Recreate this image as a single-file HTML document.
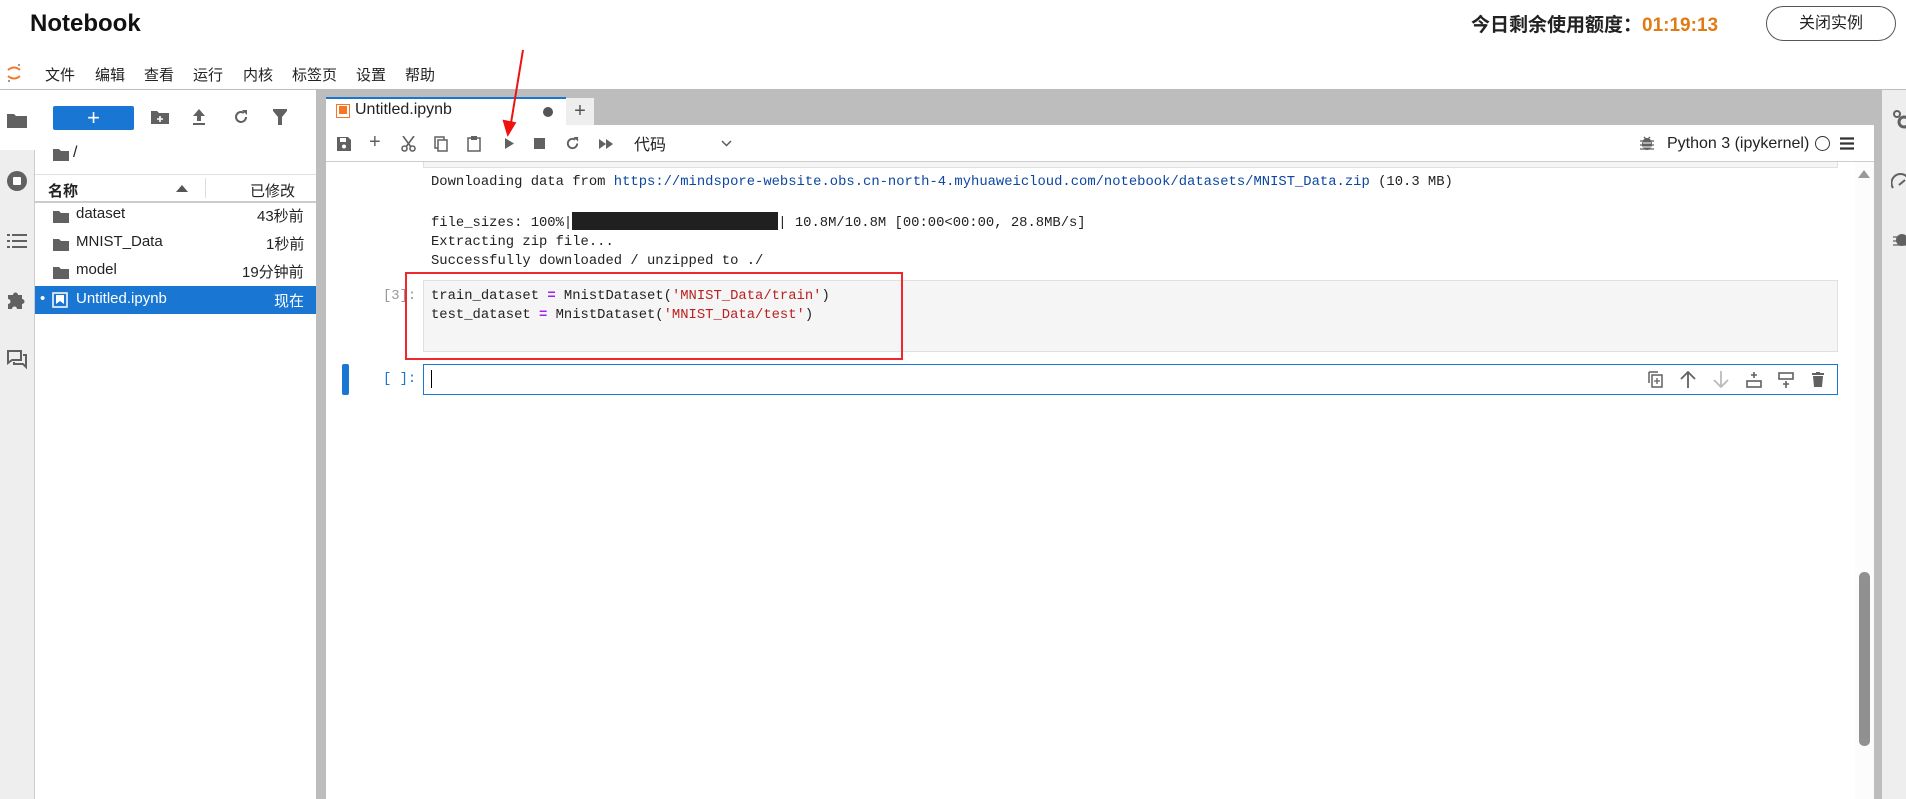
<!DOCTYPE html>
<html><head><meta charset="utf-8"><style>
*{margin:0;padding:0;box-sizing:border-box}
body{width:1906px;height:799px;overflow:hidden;background:#fff;font-family:"Liberation Sans","Noto Sans CJK SC",sans-serif;color:#222;position:relative}
.a{position:absolute}
.mono{font-family:"Liberation Mono","Noto Sans CJK SC",monospace;font-size:13.85px;white-space:pre}
.ic{fill:#616161}
</style></head><body>
<!-- header -->
<div class="a" style="left:30px;top:10px;font-size:24px;font-weight:bold;color:#111">Notebook</div>
<div class="a" style="left:1471px;top:10px;font-size:19px;font-weight:bold;color:#222">今日剩余使用额度：<span style="color:#e07b14">01:19:13</span></div>
<div class="a" style="left:1766px;top:6px;width:130px;height:35px;border:1px solid #555;border-radius:18px;font-size:16px;text-align:center;line-height:33px;color:#222">关闭实例</div>
<!-- menu -->
<svg class="a" style="left:6px;top:62px" width="16" height="22" viewBox="0 0 16 22"><path d="M2 8 Q8 3 14 8" stroke="#f37726" stroke-width="2" fill="none"/><path d="M2 14 Q8 19 14 14" stroke="#f37726" stroke-width="2" fill="none"/><circle cx="13" cy="3" r="1" fill="#777"/><circle cx="3" cy="19" r="1" fill="#777"/></svg>
<div class="a" style="top:64px;font-size:15px;color:#222;left:0;width:500px;height:20px">
<span class="a" style="left:45px">文件</span><span class="a" style="left:95px">编辑</span><span class="a" style="left:144px">查看</span><span class="a" style="left:193px">运行</span><span class="a" style="left:243px">内核</span><span class="a" style="left:292px">标签页</span><span class="a" style="left:356px">设置</span><span class="a" style="left:405px">帮助</span></div>
<div class="a" style="left:0;top:89px;width:1906px;height:1px;background:#bdbdbd"></div>
<!-- left icon bar -->
<div class="a" style="left:0;top:150px;width:35px;height:649px;background:#eee;border-right:1px solid #ccc"></div>
<div class="a" style="left:34px;top:90px;width:1px;height:60px;background:#fff"></div>
<svg class="a" style="left:7px;top:112px" width="20" height="16" viewBox="0 0 20 16"><path class="ic" d="M0 2h7l2 2h11v12H0z"/></svg>
<svg class="a" style="left:6px;top:170px" width="22" height="22" viewBox="0 0 22 22"><circle cx="11" cy="11" r="10" fill="#616161"/><rect x="7" y="7" width="8" height="8" fill="#fff" rx="1"/></svg>
<svg class="a" style="left:7px;top:233px" width="20" height="16" viewBox="0 0 20 16"><g fill="#616161"><rect x="0" y="1" width="3" height="2"/><rect x="5" y="1" width="15" height="2"/><rect x="0" y="7" width="3" height="2"/><rect x="5" y="7" width="15" height="2"/><rect x="0" y="13" width="3" height="2"/><rect x="5" y="13" width="15" height="2"/></g></svg>
<svg class="a" style="left:6px;top:289px" width="22" height="22" viewBox="0 0 22 22"><path class="ic" d="M2 6h5a2.5 2.5 0 1 1 5 0h4v4a2.5 2.5 0 1 1 0 5v5h-5a2.5 2.5 0 1 0-5 0H2v-5a2.5 2.5 0 1 0 0-5z"/></svg>
<svg class="a" style="left:7px;top:350px" width="20" height="20" viewBox="0 0 20 20"><path d="M1 1h13v9H5l-4 3z" fill="none" stroke="#616161" stroke-width="2"/><path d="M16 5h3v12l-3-3H7v-2" fill="none" stroke="#616161" stroke-width="2"/></svg>
<!-- file panel -->
<div class="a" style="left:53px;top:106px;width:81px;height:24px;background:#1976d2;border-radius:2px;color:#fff;font-size:22px;text-align:center;line-height:23px">+</div>
<svg class="a" style="left:151px;top:110px" width="18" height="14" viewBox="0 0 18 14"><path class="ic" d="M0 1h6l2 2h10v11H0z"/><path d="M9 6v6M6 9h6" stroke="#fff" stroke-width="1.6"/></svg>
<svg class="a" style="left:192px;top:109px" width="14" height="16" viewBox="0 0 14 16"><path class="ic" d="M7 0l6 7H9v5H5V7H1z"/><rect class="ic" x="1" y="14" width="12" height="2"/></svg>
<svg class="a" style="left:233px;top:109px" width="16" height="16" viewBox="0 0 16 16"><path d="M13 8a5 5 0 1 1-2-4" fill="none" stroke="#616161" stroke-width="2"/><path class="ic" d="M9 1h5v5z"/></svg>
<svg class="a" style="left:273px;top:109px" width="14" height="16" viewBox="0 0 14 16"><path class="ic" d="M0 0h14v2L9 8v8H5V8L0 2z"/></svg>
<svg class="a" style="left:53px;top:148px" width="16" height="13" viewBox="0 0 16 13"><path class="ic" d="M0 1h6l2 2h8v10H0z"/></svg>
<div class="a" style="left:73px;top:144px;font-size:16px">/</div>
<div class="a" style="left:35px;top:174px;width:281px;height:1px;background:#e0e0e0"></div>
<div class="a" style="left:35px;top:201px;width:281px;height:2px;background:#ccc"></div>
<div class="a" style="left:205px;top:178px;width:1px;height:20px;background:#ddd"></div>
<div class="a" style="left:48px;top:180px;font-size:15px;font-weight:bold">名称</div>
<svg class="a" style="left:176px;top:185px" width="12" height="7"><path d="M0 7L6 0l6 7z" fill="#555"/></svg>
<div class="a" style="left:250px;top:180px;font-size:15px">已修改</div>
<div class="a" style="left:0;top:0;font-size:15px">
<svg class="a" style="left:53px;top:210px" width="16" height="13" viewBox="0 0 16 13"><path class="ic" d="M0 1h6l2 2h8v10H0z"/></svg>
<span class="a" style="left:76px;top:205px;white-space:nowrap">dataset</span><span class="a" style="left:257px;top:205px;white-space:nowrap">43秒前</span>
<svg class="a" style="left:53px;top:238px" width="16" height="13" viewBox="0 0 16 13"><path class="ic" d="M0 1h6l2 2h8v10H0z"/></svg>
<span class="a" style="left:76px;top:233px;white-space:nowrap">MNIST_Data</span><span class="a" style="left:266px;top:233px;white-space:nowrap">1秒前</span>
<svg class="a" style="left:53px;top:266px" width="16" height="13" viewBox="0 0 16 13"><path class="ic" d="M0 1h6l2 2h8v10H0z"/></svg>
<span class="a" style="left:76px;top:261px;white-space:nowrap">model</span><span class="a" style="left:242px;top:261px;white-space:nowrap">19分钟前</span>
</div>
<div class="a" style="left:35px;top:286px;width:281px;height:28px;background:#1976d2;color:#fff;font-size:15px">
<span class="a" style="left:5px;top:4px">•</span>
<svg class="a" style="left:17px;top:6px" width="16" height="16" viewBox="0 0 16 16"><rect x="1" y="1" width="14" height="14" fill="none" stroke="#fff" stroke-width="1.5"/><path d="M4 3h8v9l-4-3-4 3z" fill="#fff"/></svg>
<span class="a" style="left:41px;top:4px">Untitled.ipynb</span><span class="a" style="left:239px;top:4px">现在</span></div>
<!-- splitter -->
<div class="a" style="left:316px;top:90px;width:10px;height:709px;background:#bdbdbd"></div>
<!-- tab bar -->
<div class="a" style="left:326px;top:90px;width:1556px;height:35px;background:#bdbdbd"></div>
<div class="a" style="left:326px;top:97px;width:240px;height:28px;background:#fff;border-top:2px solid #1976d2"></div>
<svg class="a" style="left:336px;top:104px" width="14" height="14" viewBox="0 0 14 14"><rect x="0.5" y="0.5" width="13" height="13" fill="#fff" stroke="#f37726"/><rect x="3" y="2" width="8" height="8" fill="#f37726"/></svg>
<div class="a" style="left:355px;top:101px;font-size:16px;color:#222">Untitled.ipynb</div>
<div class="a" style="left:543px;top:107px;width:10px;height:10px;border-radius:5px;background:#555"></div>
<div class="a" style="left:566px;top:98px;width:28px;height:27px;background:#eee;font-size:20px;color:#555;text-align:center;line-height:26px">+</div>
<!-- toolbar -->
<div class="a" style="left:326px;top:161px;width:1556px;height:1px;background:#ccc"></div>
<svg class="a" style="left:337px;top:137px" width="14" height="14" viewBox="0 0 14 14"><path class="ic" d="M0 0h11l3 3v11H0z"/><rect x="3" y="1" width="6" height="4" fill="#fff"/><circle cx="7" cy="9.5" r="2" fill="#fff"/></svg>
<div class="a" style="left:369px;top:131px;font-size:20px;color:#616161">+</div>
<svg class="a" style="left:401px;top:136px" width="15" height="16" viewBox="0 0 15 16"><circle cx="3.5" cy="12.5" r="2.5" fill="none" stroke="#616161" stroke-width="1.6"/><circle cx="11.5" cy="12.5" r="2.5" fill="none" stroke="#616161" stroke-width="1.6"/><path d="M5 11L13 0M10 11L2 0" stroke="#616161" stroke-width="1.6"/></svg>
<svg class="a" style="left:434px;top:136px" width="14" height="16" viewBox="0 0 14 16"><rect x="1" y="1" width="9" height="11" fill="none" stroke="#616161" stroke-width="1.5"/><rect x="4" y="4" width="9" height="11" fill="#fff" stroke="#616161" stroke-width="1.5"/></svg>
<svg class="a" style="left:467px;top:135px" width="14" height="17" viewBox="0 0 14 17"><rect x="1" y="3" width="12" height="13" fill="none" stroke="#616161" stroke-width="1.5"/><rect x="4" y="1" width="6" height="4" fill="#616161"/></svg>
<svg class="a" style="left:504px;top:138px" width="10" height="11"><path d="M1 0l9 5.5L1 11z" fill="#616161"/></svg>
<div class="a" style="left:534px;top:138px;width:11px;height:11px;background:#616161"></div>
<svg class="a" style="left:565px;top:136px" width="15" height="15" viewBox="0 0 16 16"><path d="M13 8a5 5 0 1 1-2-4" fill="none" stroke="#616161" stroke-width="2"/><path class="ic" d="M9 1h5v5z"/></svg>
<svg class="a" style="left:599px;top:139px" width="14" height="10"><path d="M0 0l7 5-7 5zM7 0l7 5-7 5z" fill="#616161"/></svg>
<div class="a" style="left:634px;top:131px;font-size:16px;color:#222">代码</div>
<svg class="a" style="left:721px;top:140px" width="11" height="7"><path d="M1 1l4.5 4.5L10 1" fill="none" stroke="#555" stroke-width="1.4"/></svg>
<svg class="a" style="left:1640px;top:135px" width="14" height="16" viewBox="0 0 14 16"><ellipse cx="7" cy="9" rx="5" ry="6" fill="#616161"/><path d="M0 6h14M0 10h14M0 14h14M4 2l2 2M10 2L8 4" stroke="#616161" stroke-width="1.3"/><path d="M3 8h8M3 12h8" stroke="#fff" stroke-width="1"/></svg>
<div class="a" style="left:1667px;top:135px;font-size:16px;color:#222">Python 3 (ipykernel)</div>
<div class="a" style="left:1815px;top:136px;width:15px;height:15px;border:1.5px solid #333;border-radius:50%"></div>
<svg class="a" style="left:1840px;top:137px" width="14" height="13"><path d="M0 1.5h14M0 6.5h14M0 11.5h14" stroke="#333" stroke-width="2.2"/></svg>
<!-- notebook content -->
<div class="a" style="left:423px;top:162px;width:1415px;height:6px;background:#f5f5f5;border:1px solid #e0e0e0;border-top:none"></div>
<div class="a mono" style="left:431px;top:174px;color:#222">Downloading data from <span style="color:#0d47a1">https://mindspore-website.obs.cn-north-4.myhuaweicloud.com/notebook/datasets/MNIST_Data.zip</span> (10.3 MB)</div>
<div class="a mono" style="left:431px;top:212px">file_sizes: 100%|<span style="display:inline-block;width:206px;height:18px;background:#202020;vertical-align:-4px"></span>| 10.8M/10.8M [00:00&lt;00:00, 28.8MB/s]</div>
<div class="a mono" style="left:431px;top:234px">Extracting zip file...</div>
<div class="a mono" style="left:431px;top:253px">Successfully downloaded / unzipped to ./</div>
<div class="a" style="left:423px;top:280px;width:1415px;height:72px;background:#f5f5f5;border:1px solid #e0e0e0"></div>
<div class="a mono" style="left:383px;top:288px;color:#999">[3]:</div>
<div class="a mono" style="left:431px;top:288px">train_dataset <span style="color:#a020f0;font-weight:bold">=</span> MnistDataset(<span style="color:#ba2121">'MNIST_Data/train'</span>)</div>
<div class="a mono" style="left:431px;top:307px">test_dataset <span style="color:#a020f0;font-weight:bold">=</span> MnistDataset(<span style="color:#ba2121">'MNIST_Data/test'</span>)</div>
<div class="a" style="left:405px;top:272px;width:498px;height:88px;border:2px solid #f0282d"></div>
<div class="a" style="left:342px;top:364px;width:7px;height:31px;background:#1976d2;border-radius:2px"></div>
<div class="a mono" style="left:383px;top:371px;color:#1976d2">[ ]:</div>
<div class="a" style="left:423px;top:364px;width:1415px;height:31px;border:1px solid #1976d2;background:#fff"></div>
<div class="a" style="left:431px;top:370px;width:1px;height:18px;background:#000"></div>
<svg class="a" style="left:1648px;top:371px" width="16" height="17" viewBox="0 0 16 17"><path d="M1 1h9M1 1v11" stroke="#616161" stroke-width="1.5"/><rect x="4" y="4" width="10" height="12" fill="none" stroke="#616161" stroke-width="1.5"/><path d="M9 7v6M6 10h6" stroke="#616161" stroke-width="1.3"/></svg>
<svg class="a" style="left:1680px;top:371px" width="16" height="17" viewBox="0 0 16 17"><path d="M8 17V2M1 8l7-7 7 7" fill="none" stroke="#616161" stroke-width="1.8"/></svg>
<svg class="a" style="left:1713px;top:371px" width="16" height="17" viewBox="0 0 16 17"><path d="M8 0v15M1 9l7 7 7-7" fill="none" stroke="#bbb" stroke-width="1.8"/></svg>
<svg class="a" style="left:1746px;top:372px" width="16" height="16" viewBox="0 0 16 16"><path d="M8 0v6M5 3h6" stroke="#616161" stroke-width="1.6"/><rect x="1" y="9" width="14" height="6" fill="none" stroke="#616161" stroke-width="1.6"/></svg>
<svg class="a" style="left:1778px;top:372px" width="16" height="16" viewBox="0 0 16 16"><rect x="1" y="1" width="14" height="6" fill="none" stroke="#616161" stroke-width="1.6"/><path d="M8 9v7M5 12h6" stroke="#616161" stroke-width="1.6"/></svg>
<svg class="a" style="left:1812px;top:372px" width="12" height="15" viewBox="0 0 12 15"><rect x="0" y="1" width="12" height="2" fill="#616161"/><rect x="4" y="0" width="4" height="2" fill="#616161"/><path d="M1 4h10l-1 11H2z" fill="#616161"/></svg>
<!-- scrollbar -->
<div class="a" style="left:1855px;top:162px;width:19px;height:637px;background:#fcfcfc"></div>
<svg class="a" style="left:1858px;top:170px" width="12" height="8"><path d="M0 8L6 0l6 8z" fill="#999"/></svg>
<div class="a" style="left:1859px;top:572px;width:11px;height:174px;background:#909090;border-radius:5px"></div>
<div class="a" style="left:1874px;top:90px;width:8px;height:709px;background:#bdbdbd"></div>
<!-- right sidebar -->
<div class="a" style="left:1882px;top:90px;width:24px;height:709px;background:#eee"></div>
<svg class="a" style="left:1893px;top:110px" width="13" height="20" viewBox="0 0 13 20"><circle cx="4" cy="4" r="3" fill="none" stroke="#616161" stroke-width="2"/><circle cx="11" cy="12" r="5" fill="none" stroke="#616161" stroke-width="3"/></svg>
<svg class="a" style="left:1891px;top:170px" width="15" height="20" viewBox="0 0 15 20"><path d="M2 18a9 9 0 1 1 15 0" fill="none" stroke="#616161" stroke-width="2"/><path d="M8 15l6-5" stroke="#616161" stroke-width="2"/></svg>
<svg class="a" style="left:1893px;top:230px" width="13" height="17" viewBox="0 0 13 17"><ellipse cx="9" cy="10" rx="6" ry="6" fill="#616161"/><path d="M0 7h13M0 11h13M0 15h13" stroke="#616161" stroke-width="1.3"/></svg>
<!-- red arrow -->
<svg class="a" style="left:495px;top:45px" width="40" height="100" viewBox="0 0 40 100"><path d="M28 5L16 78" stroke="#f01010" stroke-width="2"/><path d="M7 75l6 17 8-15z" fill="#f01010" transform="rotate(3 14 84)"/></svg>
</body></html>
